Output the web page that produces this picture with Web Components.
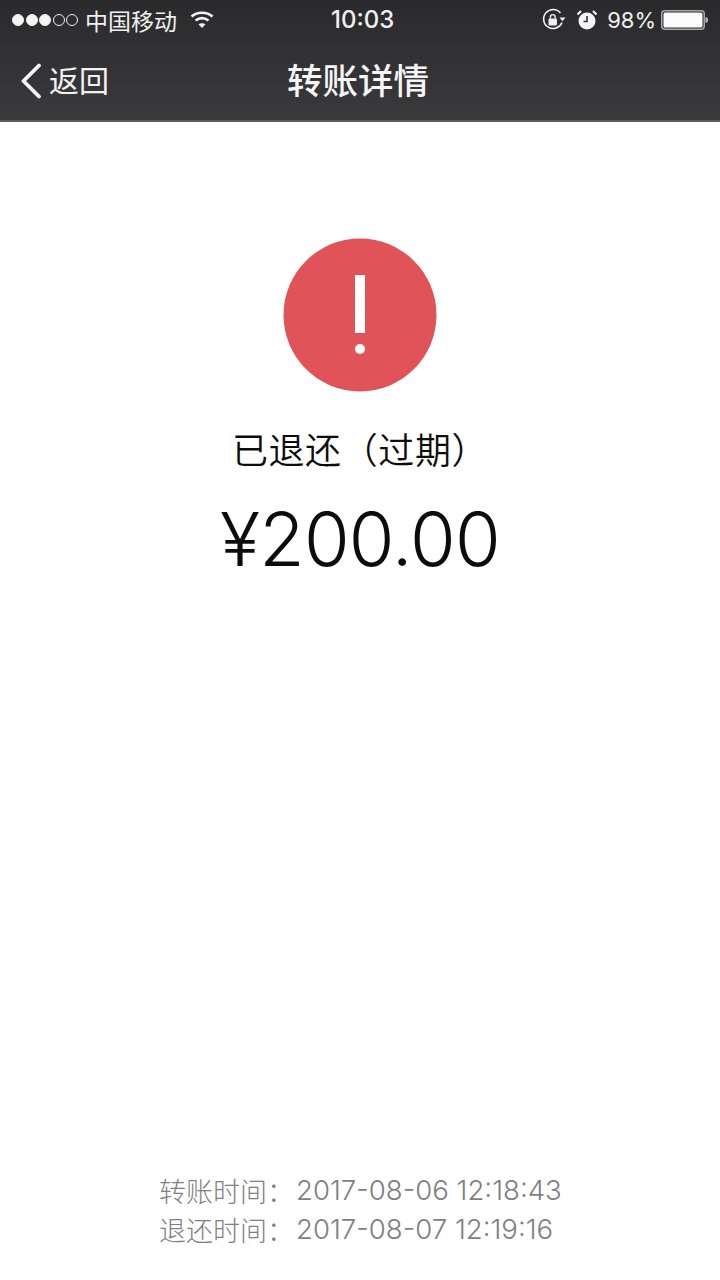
<!DOCTYPE html>
<html lang="zh">
<head>
<meta charset="utf-8">
<title>转账详情</title>
<style>
  html, body { margin: 0; padding: 0; background: #fff; }
  body { width: 720px; height: 1280px; font-family: Inter, "Noto Sans CJK SC", sans-serif; }
</style>
</head>
<body>
<transfer-page>
  <app-header slot="header" heading="转账详情" back="返回"></app-header>
  <refund-status slot="main" status="已退还（过期）" amount="¥200.00"></refund-status>
  <time-row slot="footer" label="转账时间：" value="2017-08-06 12:18:43"></time-row>
  <time-row slot="footer" label="退还时间：" value="2017-08-07 12:19:16"></time-row>
</transfer-page>

<script>
const FONT = 'Inter, "Noto Sans CJK SC", sans-serif'
const CJK = '"Noto Sans CJK SC", sans-serif'

class TransferPage extends HTMLElement {
  constructor () {
    super()
    this.attachShadow({ mode: 'open' }).innerHTML = `
      <style>
        :host { display: flex; flex-direction: column; width: 720px; height: 1280px; overflow: hidden; background: #fff; }
        main { flex: 1; }
        footer { display: flex; flex-direction: column; gap: 1px; padding: 0 0 32px 159px; }
      </style>
      <slot name="header"></slot>
      <main><slot name="main"></slot></main>
      <footer><slot name="footer"></slot></footer>
    `
  }
}

class AppHeader extends HTMLElement {
  constructor () {
    super()
    this.attachShadow({ mode: 'open' }).innerHTML = `
      <style>
        :host { display: block; height: 122px; box-sizing: border-box; color: #fff;
          background: linear-gradient(#2a2a2c, #3a3a3c); border-bottom: 2px solid #5c5c60; }
        .nav { position: relative; display: flex; align-items: center; justify-content: center; height: 80px; }
        .back { position: absolute; left: 20px; top: 0; height: 80px; display: flex; align-items: center; gap: 7px;
          font: 400 30px ${CJK}; color: #f2f2f2; }
        .back svg { display: block; margin-top: 2px; }
        .back span { position: relative; top: -1px; }
        h1 { margin: 0; font: 500 35.500px/1 ${CJK}; color: #f6f6f6; position: relative; left: -2px; top: -1px; }
      </style>
      <status-bar></status-bar>
      <div class="nav">
        <div class="back">
          <svg width="22" height="36" viewBox="0 0 22 36"><path d="M19 2.500 3.500 18 19 33.500" fill="none" stroke="#f4f4f4" stroke-width="3.800" stroke-linecap="round" stroke-linejoin="round"/></svg>
          <span></span>
        </div>
        <h1></h1>
      </div>
    `
    this.shadowRoot.querySelector('h1').textContent = this.getAttribute('heading')
    this.shadowRoot.querySelector('.back span').textContent = this.getAttribute('back')
  }
}

class StatusBar extends HTMLElement {
  constructor () {
    super()
    this.attachShadow({ mode: 'open' }).innerHTML = `
      <style>
        :host { display: flex; align-items: center; justify-content: space-between; position: relative;
          height: 40px; padding: 0 12px 0 12px; font: 400 24px ${FONT}; color: #f0f0f0; }
        .side { display: flex; align-items: center; }
        .dots { display: flex; gap: 1.500px; margin-right: 7px; }
        .dots i { width: 12px; height: 12px; box-sizing: border-box; border-radius: 50%; border: 1px solid #f0f0f0; }
        .dots i.on { background: #f4f4f4; }
        .carrier { font: 400 23px ${CJK}; margin-right: 13px; }
        .clock { position: absolute; left: 331px; top: 0; line-height: 40px; font-weight: 500; font-size: 24px; }
        .pct { margin: 0 5px 0 9px; font-size: 22px; }
        svg { display: block; }
      </style>
      <div class="side">
        <div class="dots"><i class="on"></i><i class="on"></i><i class="on"></i><i></i><i></i></div>
        <span class="carrier">中国移动</span>
        <svg width="24" height="18" viewBox="0 0 24 18" fill="none" stroke="#f4f4f4" stroke-width="2.600">
          <path d="M1.500 5.500C7.500 .5 16.500 .5 22.500 5.500"/>
          <path d="M5.500 9.500C9.500 6.500 14.500 6.500 18.500 9.500"/>
          <path d="M12 17 8.500 13.200C10.500 11.800 13.500 11.800 15.500 13.200Z" fill="#f4f4f4" stroke="none"/>
        </svg>
      </div>
      <span class="clock">10:03</span>
      <div class="side">
        <svg width="24" height="24" viewBox="0 0 24 24" style="margin-right:10px">
          <path d="M20 14.500A9.500 9.500 0 1 1 18.500 5" fill="none" stroke="#f0f0f0" stroke-width="1.600"/>
          <path d="M17.500 9.500h6l-3 3.800z" fill="#f0f0f0"/>
          <rect x="6.500" y="10.500" width="8.500" height="7" rx="1" fill="#f0f0f0"/>
          <path d="M8.400 10.500V9a2.350 2.350 0 0 1 4.700 0v1.500" fill="none" stroke="#f0f0f0" stroke-width="1.400"/>
        </svg>
        <svg width="22" height="22" viewBox="0 0 22 22">
          <circle cx="11" cy="12" r="8.500" fill="#f4f4f4"/>
          <path d="M11 7v5.500H7.500" fill="none" stroke="#333" stroke-width="1.600"/>
          <path d="M1.500 5.500 5 2M20.500 5.500 17 2" stroke="#f4f4f4" stroke-width="2.200"/>
        </svg>
        <span class="pct">98%</span>
        <svg width="47" height="22" viewBox="0 0 47 22">
          <rect x=".75" y="1.750" width="42.500" height="18.500" rx="3" fill="none" stroke="#a8a8a8" stroke-width="1.500"/>
          <rect x="2.500" y="3.500" width="39" height="15" rx="1.500" fill="#fbfbfb"/>
          <path d="M44.500 8c1.500 0 2.500 1 2.500 3s-1 3-2.500 3z" fill="#bbb"/>
        </svg>
      </div>
    `
  }
}

class RefundStatus extends HTMLElement {
  constructor () {
    super()
    this.attachShadow({ mode: 'open' }).innerHTML = `
      <style>
        :host { display: flex; flex-direction: column; align-items: center; padding-top: 116px; color: #0c0c0c; }
        svg { display: block; }
        .status { margin-top: 31px; font: 300 36px/50px ${CJK}; letter-spacing: .6px; font-weight: 350; }
        .amount { margin-top: 20px; font: 300 74px/92px ${FONT}; letter-spacing: -.8px; }
      </style>
      <svg width="154" height="154" viewBox="0 0 154 154">
        <circle cx="77" cy="77" r="76.500" fill="#e05459"/>
        <rect x="72" y="37" width="10" height="58" fill="#fff"/>
        <circle cx="77" cy="111" r="5" fill="#fff"/>
      </svg>
      <div class="status"></div>
      <div class="amount"></div>
    `
    this.shadowRoot.querySelector('.status').textContent = this.getAttribute('status')
    this.shadowRoot.querySelector('.amount').textContent = this.getAttribute('amount')
  }
}

class TimeRow extends HTMLElement {
  constructor () {
    super()
    this.attachShadow({ mode: 'open' }).innerHTML = `
      <style>
        :host { display: flex; height: 38px; align-items: center; color: #7f7f7f; font: 300 27.600px ${FONT}; white-space: nowrap; }
        .label { font: 300 27px ${CJK}; width: 137px; }
      </style>
      <span class="label"></span><span class="value"></span>
    `
    this.shadowRoot.querySelector('.label').textContent = this.getAttribute('label')
    this.shadowRoot.querySelector('.value').textContent = this.getAttribute('value')
  }
}

customElements.define('status-bar', StatusBar)
customElements.define('app-header', AppHeader)
customElements.define('refund-status', RefundStatus)
customElements.define('time-row', TimeRow)
customElements.define('transfer-page', TransferPage)
</script>
</body>
</html>
